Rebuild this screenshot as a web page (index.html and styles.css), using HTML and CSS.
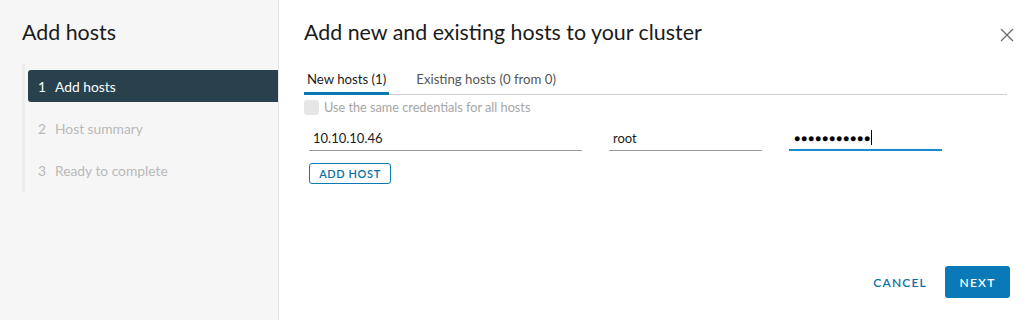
FILE: index.html
```html
<!DOCTYPE html>
<html lang="en">
<head>
    <meta charset="UTF-8">
    <title>Add hosts</title>
    <link rel="stylesheet" href="styles.css">
</head>
<body>

<div class="wizard">
    <aside class="sidebar">
        <h2 class="wizard-title">Add hosts</h2>
        <nav class="steps">
            <div class="step active"><span class="num">1</span>Add hosts</div>
            <div class="step"><span class="num">2</span>Host summary</div>
            <div class="step"><span class="num">3</span>Ready to complete</div>
        </nav>
    </aside>

    <main class="content">
        <div class="content-head">
            <h2 class="page-title">Add new and existing hosts to your cluster</h2>
            <button class="close-btn" aria-label="Close">
                <svg width="14" height="14" viewBox="0 0 14 14">
                    <path d="M1 1 L13 13 M13 1 L1 13" stroke="#6a6a6a" stroke-width="1.3" fill="none"/>
                </svg>
            </button>
        </div>

        <div class="tabs">
            <a class="tab active">New hosts (1)</a>
            <a class="tab">Existing hosts (0 from 0)</a>
        </div>

        <label class="same-creds">
            <span class="checkbox"></span>
            Use the same credentials for all hosts
        </label>

        <div class="host-row">
            <input class="field host" type="text" value="10.10.10.46">
            <input class="field user" type="text" value="root">
            <div class="field pass focused">●●●●●●●●●●●<span class="caret"></span></div>
        </div>

        <button class="add-btn">ADD HOST</button>

        <div class="footer">
            <button class="cancel-btn">CANCEL</button>
            <button class="next-btn">NEXT</button>
        </div>
    </main>
</div>

</body>
</html>
```

FILE: styles.css
```css
body {
    font-family: Lato, 'Open Sans', sans-serif;
    margin: 0;
    padding: 0;
    background: #fff;
    color: #313131;
}

.wizard {
    display: flex;
    height: 320px;
}

.sidebar {
    width: 278px;
    flex-shrink: 0;
    background-color: #f6f6f6;
    border-right: 1px solid #e3e3e3;
    padding-top: 18px;
}

.wizard-title,
.page-title {
    margin: 0;
    font-size: 21.4px;
    font-weight: 400;
    line-height: 28px;
    color: #1b1b1b;
}

.wizard-title {
    margin-left: 22px;
}

.steps {
    margin: 18px 0 0 22px;
    padding: 6px 0;
    border-left: 3px solid #ececec;
    display: flex;
    flex-direction: column;
    gap: 10px;
}

.step {
    height: 32px;
    margin-left: 3px;
    padding-left: 10px;
    display: flex;
    align-items: center;
    font-size: 13.8px;
    color: #b9b9b9;
    border-radius: 3px 0 0 3px;
}

.step .num {
    margin-right: 9px;
}

.step.active {
    background-color: #29414c;
    color: #fff;
}

.content {
    flex: 1;
    padding: 18px 21px 22px 25px;
    display: flex;
    flex-direction: column;
}

.content-head {
    display: flex;
    justify-content: space-between;
    align-items: center;
}

.close-btn {
    background: none;
    border: none;
    padding: 0;
    margin-right: -6px;
    width: 18px;
    height: 18px;
    margin-top: 8px;
    cursor: pointer;
}

.tabs {
    display: flex;
    gap: 24px;
    margin: 25px 3px 0 0;
    border-bottom: 1px solid #cfcfcf;
}

.tab {
    font-size: 13.2px;
    padding: 0 3px 5px;
    color: #565656;
    border-bottom: 3px solid transparent;
    margin-bottom: -1px;
}

.tab.active {
    color: #1b1b1b;
    border-bottom-color: #0a7ab4;
}

.same-creds {
    display: flex;
    align-items: center;
    gap: 5px;
    margin-top: 4px;
    font-size: 12.7px;
    color: #a6a6a6;
}

.checkbox {
    width: 15px;
    height: 15px;
    border-radius: 3px;
    background-color: #e6e6e6;
}

.host-row {
    display: flex;
    gap: 27px;
    margin: 11px 0 0 5px;
}

.field {
    box-sizing: border-box;
    height: 25px;
    border: none;
    border-bottom: 1px solid #9a9a9a;
    padding: 0 4px;
    font-family: inherit;
    font-size: 13px;
    color: #1b1b1b;
    background: transparent;
    outline: none;
}

.host {
    width: 273px;
}

.user,
.pass {
    width: 153px;
}

.pass {
    display: flex;
    align-items: center;
    padding-left: 5px;
    font-size: 10px;
    letter-spacing: 1px;
    color: #000;
}

.focused {
    border-bottom: 2px solid #1a8bd1;
}

.caret {
    width: 1px;
    height: 15px;
    background: #000;
    margin-left: 0;
}

.add-btn {
    align-self: flex-start;
    margin: 12px 0 0 5px;
    height: 21px;
    width: 82px;
    padding: 0;
    background: #fff;
    border: 1px solid #0a7ab4;
    border-radius: 3px;
    color: #0a6fa6;
    font-family: inherit;
    font-size: 11px;
    font-weight: 600;
    letter-spacing: 0.6px;
    cursor: pointer;
}

.footer {
    margin-top: auto;
    display: flex;
    justify-content: flex-end;
    align-items: center;
    gap: 6px;
}

.cancel-btn,
.next-btn {
    height: 32px;
    border: none;
    border-radius: 3px;
    font-family: inherit;
    font-size: 12px;
    font-weight: 600;
    letter-spacing: 1.2px;
    cursor: pointer;
}

.cancel-btn {
    background: none;
    color: #0a6fa6;
    padding: 0 12px;
}

.next-btn {
    width: 65px;
    background-color: #0a79b7;
    color: #fff;
    padding: 0;
}
```
